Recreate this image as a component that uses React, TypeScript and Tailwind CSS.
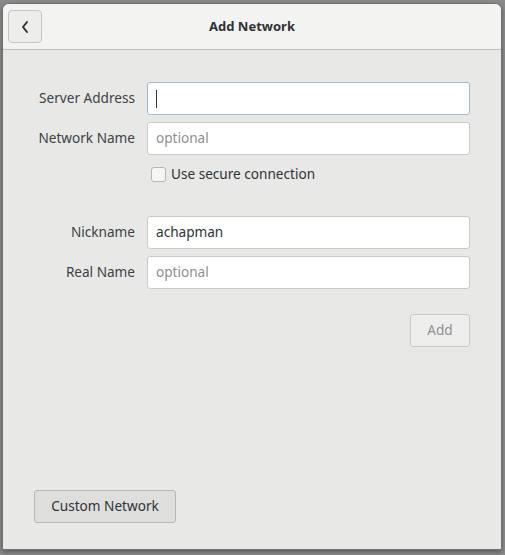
import { useState } from 'react'

const FONT = "font-['Noto_Sans',sans-serif]"

function Field({ label, value, placeholder, focused }: { label: string; value?: string; placeholder?: string; focused?: boolean }) {
  return (
    <div className="flex items-center">
      <span className="w-[101px] shrink-0 text-right text-[13.6px] text-[#3d4244]">{label}</span>
      <div
        className={
          'ml-[12px] flex h-[33px] flex-1 items-center rounded-[3px] border bg-white px-[8px] text-[13.6px] ' +
          (focused ? 'border-[#9fbad3]' : 'border-[#cdc9c5]')
        }
      >
        {focused && <span className="h-[18px] w-px bg-[#2e3436]" />}
        {value ? (
          <span className="text-[#2e3436]">{value}</span>
        ) : placeholder ? (
          <span className="text-[#8e9192]">{placeholder}</span>
        ) : null}
      </div>
    </div>
  )
}

export default function App() {
  const [secure, setSecure] = useState(false)

  return (
    <div className={`h-[555px] w-[505px] bg-[#8a8a8a] pb-[5px] pl-[2px] pr-[3px] pt-[3px] ${FONT}`}>
      <div className="flex h-full flex-col overflow-hidden rounded-t-[7px] border border-[#6f6f6f] bg-[#e8e8e7] shadow-[0_2px_4px_rgba(0,0,0,0.35)]">
        {/* header bar */}
        <div className="relative flex h-[46px] shrink-0 items-center border-b border-[#bfbfbd] bg-[#f3f3f2]">
          <button
            type="button"
            className="absolute left-[5px] top-[6px] flex h-[33px] w-[34px] items-center justify-center rounded-[4px] border border-[#c5c5c3] bg-[#ededec]"
          >
            <svg width="10" height="14" viewBox="0 0 10 14" fill="none" stroke="#2e3436" strokeWidth="2" strokeLinecap="round" strokeLinejoin="round" aria-hidden>
              <path d="M7 2 L3 7 L7 12" />
            </svg>
          </button>
          <p className="flex-1 text-center text-[13px] font-bold text-[#2e3436]">Add Network</p>
        </div>

        {/* form */}
        <div className="flex flex-1 flex-col px-[31px] pb-[26px] pt-[32px]">
          <div className="flex flex-col gap-[7px]">
            <Field label="Server Address" focused />
            <Field label="Network Name" placeholder="optional" />
          </div>

          <label className="ml-[117px] mt-[11px] flex h-[16px] items-center gap-[5px] text-[13.6px] text-[#2e3436]">
            <button
              type="button"
              onClick={() => setSecure(!secure)}
              className="h-[15px] w-[15px] rounded-[3px] border border-[#b6b6b3] bg-[#f6f6f5]"
            />
            <span>Use secure connection</span>
          </label>

          <div className="mt-[34px] flex flex-col gap-[7px]">
            <Field label="Nickname" value="achapman" />
            <Field label="Real Name" placeholder="optional" />
          </div>

          <div className="mt-[25px] flex justify-end">
            <button
              type="button"
              disabled
              className="h-[33px] w-[60px] rounded-[3px] border border-[#cdc9c5] bg-[#eeeeed] text-[13.6px] text-[#8e9192]"
            >
              Add
            </button>
          </div>

          <div className="mt-auto">
            <button
              type="button"
              className="h-[33px] w-[142px] rounded-[3px] border border-[#b8b8b6] bg-[#dededd] text-[13.6px] text-[#2e3436]"
            >
              Custom Network
            </button>
          </div>
        </div>
      </div>
    </div>
  )
}
